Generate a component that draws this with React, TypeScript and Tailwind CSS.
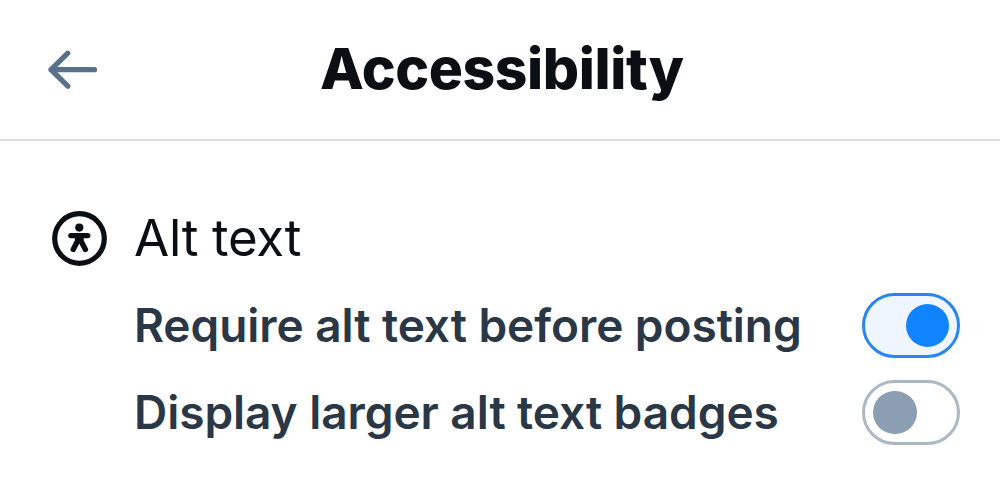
import React, { useState } from "react";

const initialSettings = [
  { id: "require", label: "Require alt text before posting", enabled: true },
  { id: "badges", label: "Display larger alt text badges", enabled: false },
];

function BackArrow() {
  return (
    <svg width="50" height="40" viewBox="0 0 50 40" fill="none" stroke="#59708a" strokeWidth="5.2" strokeLinecap="round" strokeLinejoin="round">
      <path d="M19.8 3.2 L3 19.7 L19.8 36.2 M3 19.7 H46.5" />
    </svg>
  );
}

function AccessibilityIcon() {
  return (
    <svg width="55" height="55" viewBox="0 0 55 55" fill="none" stroke="#0b0f14" strokeLinecap="round" strokeLinejoin="round">
      <circle cx="27.5" cy="27.5" r="24.8" strokeWidth="5.2" />
      <circle cx="27.3" cy="16.6" r="4.1" fill="#0b0f14" stroke="none" />
      <path d="M18.8 24.6 H35.8" strokeWidth="5.2" />
      <path d="M25.6 25 V30 L21.2 38.4 M29 25 V30 L33.4 38.4" strokeWidth="5.4" />
    </svg>
  );
}

function Toggle({ enabled, onChange, label }: { enabled: boolean; onChange: () => void; label: string }) {
  return (
    <button
      role="switch"
      aria-checked={enabled}
      aria-label={label}
      onClick={onChange}
      className={`flex h-[65px] w-[98px] items-center rounded-full border-3 px-2 ${
        enabled ? "justify-end border-[#2787ef] bg-[#eff6ff]" : "justify-start border-[#adb8c5] bg-white"
      }`}
    >
      <span className={`size-[43.5px] rounded-full ${enabled ? "bg-[#1083fe]" : "bg-[#8c9eb2]"}`} />
    </button>
  );
}

export default function App() {
  const [settings, setSettings] = useState(initialSettings);

  const toggle = (id: string) =>
    setSettings((prev) => prev.map((s) => (s.id === id ? { ...s, enabled: !s.enabled } : s)));

  return (
    <div className="h-[481px] w-[1000px] overflow-hidden bg-white font-['Inter',sans-serif] text-[#0b0f14]">
      <header className="flex h-[141px] items-center border-b-2 border-[#dcdedf] pl-12">
        <button aria-label="Back" className="w-[50px]">
          <BackArrow />
        </button>
        <h1 className="ml-[222px] pb-[3px] text-[57px] font-extrabold leading-none tracking-[-0.4px] whitespace-nowrap">Accessibility</h1>
      </header>

      <main className="pt-[70px] pr-10 pl-[52px]">
        <div className="flex h-[55px] items-center gap-[27px]">
          <AccessibilityIcon />
          <h2 className="pb-[3px] text-[51px] leading-none tracking-[-0.3px]">Alt text</h2>
        </div>
        <div className="mt-[27px] flex flex-col gap-[22px] pl-[82px]">
          {settings.map((s) => (
            <div key={s.id} className="flex items-center justify-between">
              <span className="pb-0.5 text-[46px] font-semibold leading-none tracking-[-0.05px] whitespace-nowrap text-[#2a3747]">{s.label}</span>
              <Toggle enabled={s.enabled} onChange={() => toggle(s.id)} label={s.label} />
            </div>
          ))}
        </div>
      </main>
    </div>
  );
}
